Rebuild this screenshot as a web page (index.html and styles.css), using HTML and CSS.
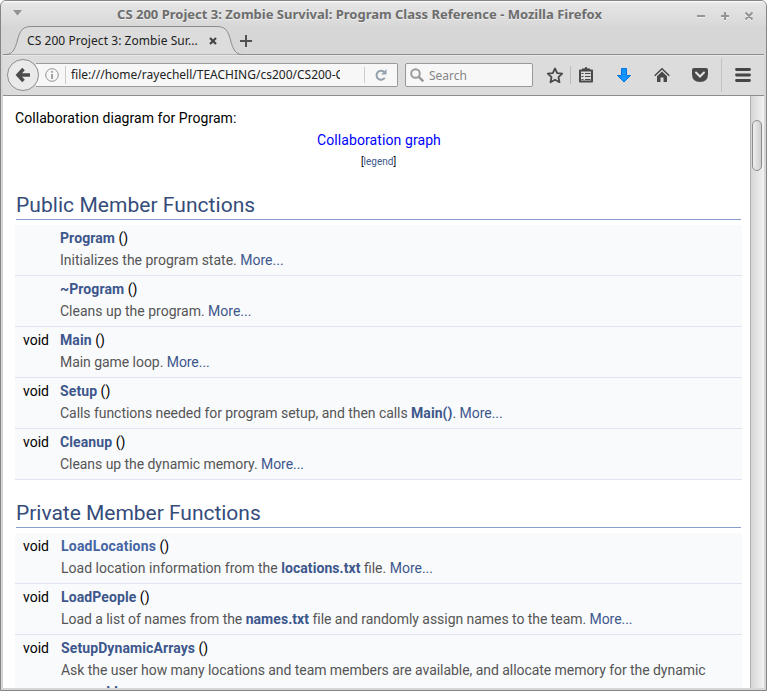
FILE: index.html
```
<!DOCTYPE html>
<html lang="en">
<head>
<meta charset="utf-8">
<title>CS 200 Project 3: Zombie Survival: Program Class Reference</title>
<link rel="stylesheet" href="styles.css">
</head>
<body>
<div class="window">
  <header class="titlebar">
    <svg class="menu-arrow" width="10" height="6" viewBox="0 0 10 6"><path d="M0 0h9L4.500 5.500z" fill="#929292"/></svg>
    <h1 class="window-title">CS 200 Project 3: Zombie Survival: Program Class Reference - Mozilla Firefox</h1>
    <svg class="window-buttons" width="58" height="12" viewBox="0 0 58 12" fill="none"><path d="M1 8h8M25 8h8M29 4v8M49.500 4.500l7 7M56.500 4.500l-7 7" stroke="#f2f2f2" stroke-width="2"/><path d="M1 7h8M25 7h8M29 3v8M49.500 3.500l7 7M56.500 3.500l-7 7" stroke="#949494" stroke-width="2"/></svg>
  </header>
  <div class="tabs">
    <svg class="tab-shape" width="252" height="29" viewBox="0 0 252 29"><path d="M0 28.500H3C9 28.500 12 24 14.500 14S20 .5 29 .5H213C222 .5 225 4 227.500 14S233 28.500 239 28.500" fill="#dcdcdc" stroke="#888b90"/></svg>
    <span class="tab-label">CS 200 Project 3: Zombie Sur...</span>
    <svg class="tab-close" width="8" height="8" viewBox="0 0 8 8" stroke="#444" stroke-width="2.200"><path d="M1 1l6 6M7 1L1 7"/></svg>
    <svg class="tab-new" width="12" height="12" viewBox="0 0 12 12" stroke="#505050" stroke-width="2"><path d="M0 6h12M6 0v12"/></svg>
  </div>
  <nav class="toolbar">
    <span class="back"><svg width="16" height="16" viewBox="0 0 16 16" fill="none" stroke="#4c4c4c" stroke-width="3.500"><path d="M8.500 2L3 8l5.500 6M3.500 8H15"/></svg></span>
    <div class="url">
      <svg class="info" width="14" height="14" viewBox="0 0 14 14"><circle cx="7" cy="7" r="6.300" fill="none" stroke="#929292"/><path d="M6.200 3h1.700v1.700H6.200zM6.200 6h1.700v5H6.200z" fill="#929292"/></svg>
      <span class="address">file:///home/rayechell/TEACHING/cs200/CS200-Course</span>
      <svg class="reload" width="12" height="12" viewBox="0 0 12 12"><path d="M9.500 3.300A4.500 4.500 0 1 0 9.800 8.700" fill="none" stroke="#94a1ad" stroke-width="2"/><path d="M11.500 0v5.500H6z" fill="#94a1ad"/></svg>
    </div>
    <div class="search">
      <svg width="15" height="15" viewBox="0 0 15 15" fill="none" stroke="#999"><circle cx="5.500" cy="5.500" r="4.300" stroke-width="1.900"/><path d="M8.800 8.800l4.500 4.500" stroke-width="2.500"/></svg>
      <span>Search</span>
    </div>
    <svg class="icons" width="218" height="36" viewBox="0 0 218 36">
      <path d="M15 11.500l2.200 4.600 5 .6-3.700 3.500 1 5-4.500-2.500-4.500 2.500 1-5-3.700-3.500 5-.6z" fill="none" stroke="#494949" stroke-width="1.800" stroke-linejoin="round"/>
      <path d="M30.500 9v18" stroke="#bababa"/>
      <path d="M40 13.500h12v11H40z" fill="none" stroke="#494949" stroke-width="2" stroke-linejoin="round"/><path d="M42 13.500v-2h2.500l1-1.500h1l1 1.500H50v2z" fill="#494949"/><path d="M41.500 16.500h2M45 16.500h5.500M41.500 19.500h2M45 19.500h5.500M41.500 22.500h2M45 22.500h5.500" stroke="#494949"/>
      <path d="M81.500 11.500h5v7h4L84 25l-6.500-6.500h4z" fill="#1393ff" stroke="#0871dd"/>
      <path d="M114.700 18.700l7.300-7 7.300 7" fill="none" stroke="#494949" stroke-width="1.500"/><path d="M117 19.200l5-4.800 5 4.800V25h-3.500v-4.500h-3V25H117z" fill="#494949"/>
      <path d="M152 13q0-2 2-2h12q2 0 2 2v4q0 8-8 8t-8-8z" fill="#494949"/><path d="M156 15.500l4 4 4-4" fill="none" stroke="#e4e4e4" stroke-width="2" stroke-linecap="round"/>
      <path d="M181.500 1v34" stroke="#c2c2c2"/>
      <path d="M196.500 12.500h13M196.500 18h13M196.500 23.500h13" stroke="#454545" stroke-width="2.800" stroke-linecap="round"/>
    </svg>
  </nav>
  <div class="viewport">
    <main class="page">
      <p class="diagram">Collaboration diagram for Program:</p>
      <p class="graph">Collaboration graph</p>
      <p class="legend">[<a>legend</a>]</p>
      <h2>Public Member Functions</h2>
      <div class="members">
        <div class="member"><span class="type"></span><div><p><b>Program</b> ()</p><p class="desc even">Initializes the program state. <a>More...</a></p></div></div>
        <div class="member"><span class="type"></span><div><p><b>~Program</b> ()</p><p class="desc even">Cleans up the program. <a>More...</a></p></div></div>
        <div class="member"><span class="type">void</span><div><p><b>Main</b> ()</p><p class="desc">Main game loop. <a>More...</a></p></div></div>
        <div class="member"><span class="type">void</span><div><p><b>Setup</b> ()</p><p class="desc">Calls functions needed for program setup, and then calls <b>Main()</b>. <a>More...</a></p></div></div>
        <div class="member"><span class="type">void</span><div><p><b>Cleanup</b> ()</p><p class="desc">Cleans up the dynamic memory. <a>More...</a></p></div></div>
      </div>
      <h2 class="tight">Private Member Functions</h2>
      <div class="members private">
        <div class="member"><span class="type">void</span><div><p><b class="hover">LoadLocations</b> ()</p><p class="desc even">Load location information from the <b>locations.txt</b> file. <a>More...</a></p></div></div>
        <div class="member"><span class="type">void</span><div><p><b>LoadPeople</b> ()</p><p class="desc">Load a list of names from the <b>names.txt</b> file and randomly assign names to the team. <a>More...</a></p></div></div>
        <div class="member"><span class="type">void</span><div><p><b>SetupDynamicArrays</b> ()</p><p class="desc">Ask the user how many locations and team members are available, and allocate memory for the dynamic arrays. <a>More...</a></p></div></div>
      </div>
    </main>
    <div class="scrollbar"><div class="thumb"></div></div>
  </div>
</div>
</body>
</html>
```
FILE: styles.css
```
* { box-sizing: border-box; }
body { margin: 0; background: #fff; overflow: hidden; }
p, h1, h2 { margin: 0; }
svg { display: block; flex: none; }
.window { width: 767px; height: 691px; border: 1px solid #858585; border-radius: 6px 6px 0 0; background: #d6d6d6; padding: 0 2px 2px; display: flex; flex-direction: column; overflow: hidden; }
.titlebar { height: 25px; flex: none; margin: 0 -2px; padding: 0 12px 0 12px; display: flex; align-items: center; background: linear-gradient(#fff 0, #e6e6e6 2px, #d8d8d8); }
.menu-arrow { margin-top: -1px; }
.window-title { flex: 1; text-align: center; font: bold 13px/25px "Noto Sans", sans-serif; color: #6d6d6d; text-shadow: 0 1px #eee; white-space: nowrap; padding-top: 2px; }
.window-buttons { margin-top: 2px; }
.tabs { height: 29px; flex: none; display: flex; align-items: center; background: linear-gradient(#d6d6d6 28px, #8d8d8d 28px); font: 12px/29px "Noto Sans", sans-serif; color: #222; }
.tab-shape { margin-right: -228px; }
.tab-label { width: 182px; letter-spacing: .06px; white-space: nowrap; z-index: 1; }
.tab-close { z-index: 1; }
.tab-new { margin-left: 23px; }
.toolbar { height: 41px; flex: none; display: flex; align-items: center; border-bottom: 1px solid #8d8d8d; background: linear-gradient(#e8e8e8 1px, #dcdcdc 1px); font: 12px/22px "Noto Sans", sans-serif; }
.back { width: 32px; height: 32px; margin-left: 4px; border: 1px solid #8d8d8d; border-radius: 50%; background: #eaeaea; display: flex; align-items: center; justify-content: center; z-index: 1; }
.url { width: 362px; height: 24px; margin-left: -3px; border: 1px solid #999; border-left: 0; border-radius: 0 2px 2px 0; background: #f7f7f7; display: flex; align-items: center; }
.info { margin-left: 9px; }
.address { width: 275px; height: 18px; line-height: 18px; margin: 0 1px 0 6px; padding-left: 5px; border-left: 1px solid #ccc; overflow: hidden; white-space: nowrap; color: #222; }
.reload { box-sizing: content-box; margin-left: 23px; padding: 2px 0 2px 10px; border-left: 1px solid #ccc; }
.search { width: 128px; height: 24px; margin-left: 7px; border: 1px solid #999; border-radius: 2px; background: #f7f7f7; display: flex; align-items: center; padding-left: 4px; gap: 4px; color: #858585; }
.search span { padding-top: 1px; }
.icons { margin-left: 7px; }
.viewport { flex: 1; min-height: 0; display: flex; background: #fff; overflow: hidden; font: 14px/22px Roboto, sans-serif; }
.page { width: 747px; padding: 11px 8px 0 12px; color: #000; }
a, b { color: #3d578c; }
b { letter-spacing: .1px; }
.diagram { height: 22px; letter-spacing: .06px; }
.graph, .legend { text-align: center; }
.graph { color: #00f; letter-spacing: .09px; padding-left: 1px; }
.legend { font-size: 10px; height: 21px; }
h2 { font: 400 21px/28px Roboto, sans-serif; color: #354c7b; height: 48px; margin: 0 1px 5px; padding-top: 19px; border-bottom: 1px solid #879ecb; letter-spacing: .05px; }
.tight { letter-spacing: -.02px; }
.members { background: #f9fafc; }
.member { min-height: 51px; border-bottom: 1px solid #dee4f0; display: flex; padding-top: 2px; }
.type { width: 45px; padding-left: 8px; flex: none; }
.private .type { width: 46px; }
.desc { color: #555; letter-spacing: -.05px; }
.even { letter-spacing: 0; }
.desc b { letter-spacing: .06px; }
.hover { color: #4665a2; letter-spacing: .2px; }
.scrollbar { width: 14px; border-left: 1px solid #b0b0b0; background: linear-gradient(90deg, #d6d6d6, #f2f2f2); padding: 24px 2px 0 1px; }
.thumb { height: 51px; border: 1px solid #8c8c8c; border-radius: 5px; background: linear-gradient(90deg, #eee, #cecece); }
```
